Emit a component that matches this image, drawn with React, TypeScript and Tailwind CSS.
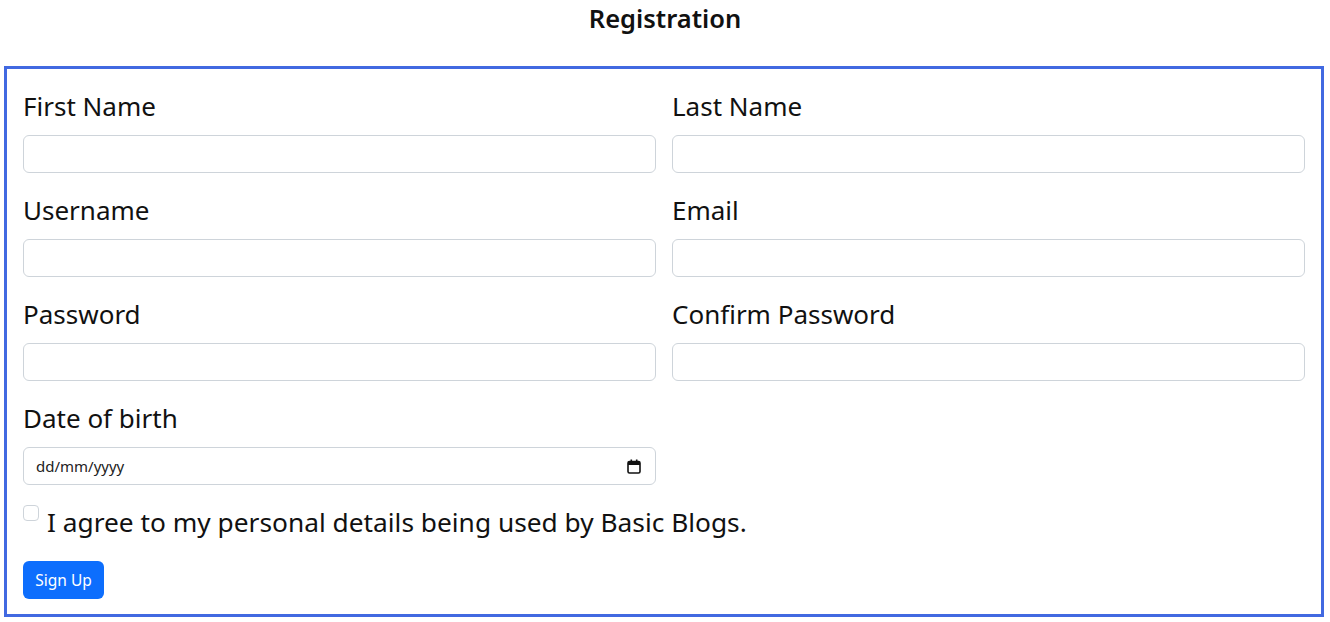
export default function App() {
  const fields: [string, string][] = [
    ["First Name", "Last Name"],
    ["Username", "Email"],
    ["Password", "Confirm Password"],
  ];

  return (
    <div className="min-h-screen bg-white text-[#111] font-['Noto_Sans',sans-serif]">
      <h4 className="text-center text-[25.5px] font-semibold leading-[36px] mb-[30px]">Registration</h4>

      <form className="ml-[4px] w-[1320px] border-[3px] border-[#4169e1] px-[16px] pt-[22px] pb-[15px]">
        {fields.map(([a, b]) => (
          <div key={a} className="grid grid-cols-2 gap-x-[16px] mb-[22px]">
            <div>
              <label className="block text-[26px] leading-[31px] mb-[13px]">{a}</label>
              <input className="block w-full h-[38px] rounded-[6px] border border-[#ced4da] px-3 outline-none" />
            </div>
            <div>
              <label className="block text-[26px] leading-[31px] mb-[13px]">{b}</label>
              <input className="block w-full h-[38px] rounded-[6px] border border-[#ced4da] px-3 outline-none" />
            </div>
          </div>
        ))}

        <div className="grid grid-cols-2 gap-x-[16px] mb-[20px]">
          <div>
            <label className="block text-[26px] leading-[31px] mb-[13px]">Date of birth</label>
            <div className="flex items-center justify-between h-[38px] rounded-[6px] border border-[#ced4da] pl-[12px] pr-[14px]">
              <span className="text-[15px] text-[#222]">dd/mm/yyyy</span>
              <svg width="14" height="15" viewBox="0 0 14 15">
                <rect x="1" y="2.5" width="12" height="11.5" rx="1.5" fill="none" stroke="#111" strokeWidth="1.6" />
                <rect x="1" y="3" width="12" height="3" fill="#111" />
                <rect x="3.5" y="0.5" width="1.6" height="3" fill="#111" />
                <rect x="8.9" y="0.5" width="1.6" height="3" fill="#111" />
              </svg>
            </div>
          </div>
          <div />
        </div>

        <div className="flex items-start gap-[8px] mb-[20px]">
          <input
            type="checkbox"
            className="appearance-none w-[16px] h-[16px] mt-0 rounded-[4px] border border-[#ced4da] bg-white shrink-0"
          />
          <label className="text-[26.3px] leading-[35px] mb-[1px]">I agree to my personal details being used by Basic Blogs.</label>
        </div>

        <button
          type="button"
          className="h-[38px] w-[81px] rounded-[6px] bg-[#0d6efd] text-white text-[15.5px] pt-[1px]"
        >
          Sign Up
        </button>
      </form>
    </div>
  );
}
